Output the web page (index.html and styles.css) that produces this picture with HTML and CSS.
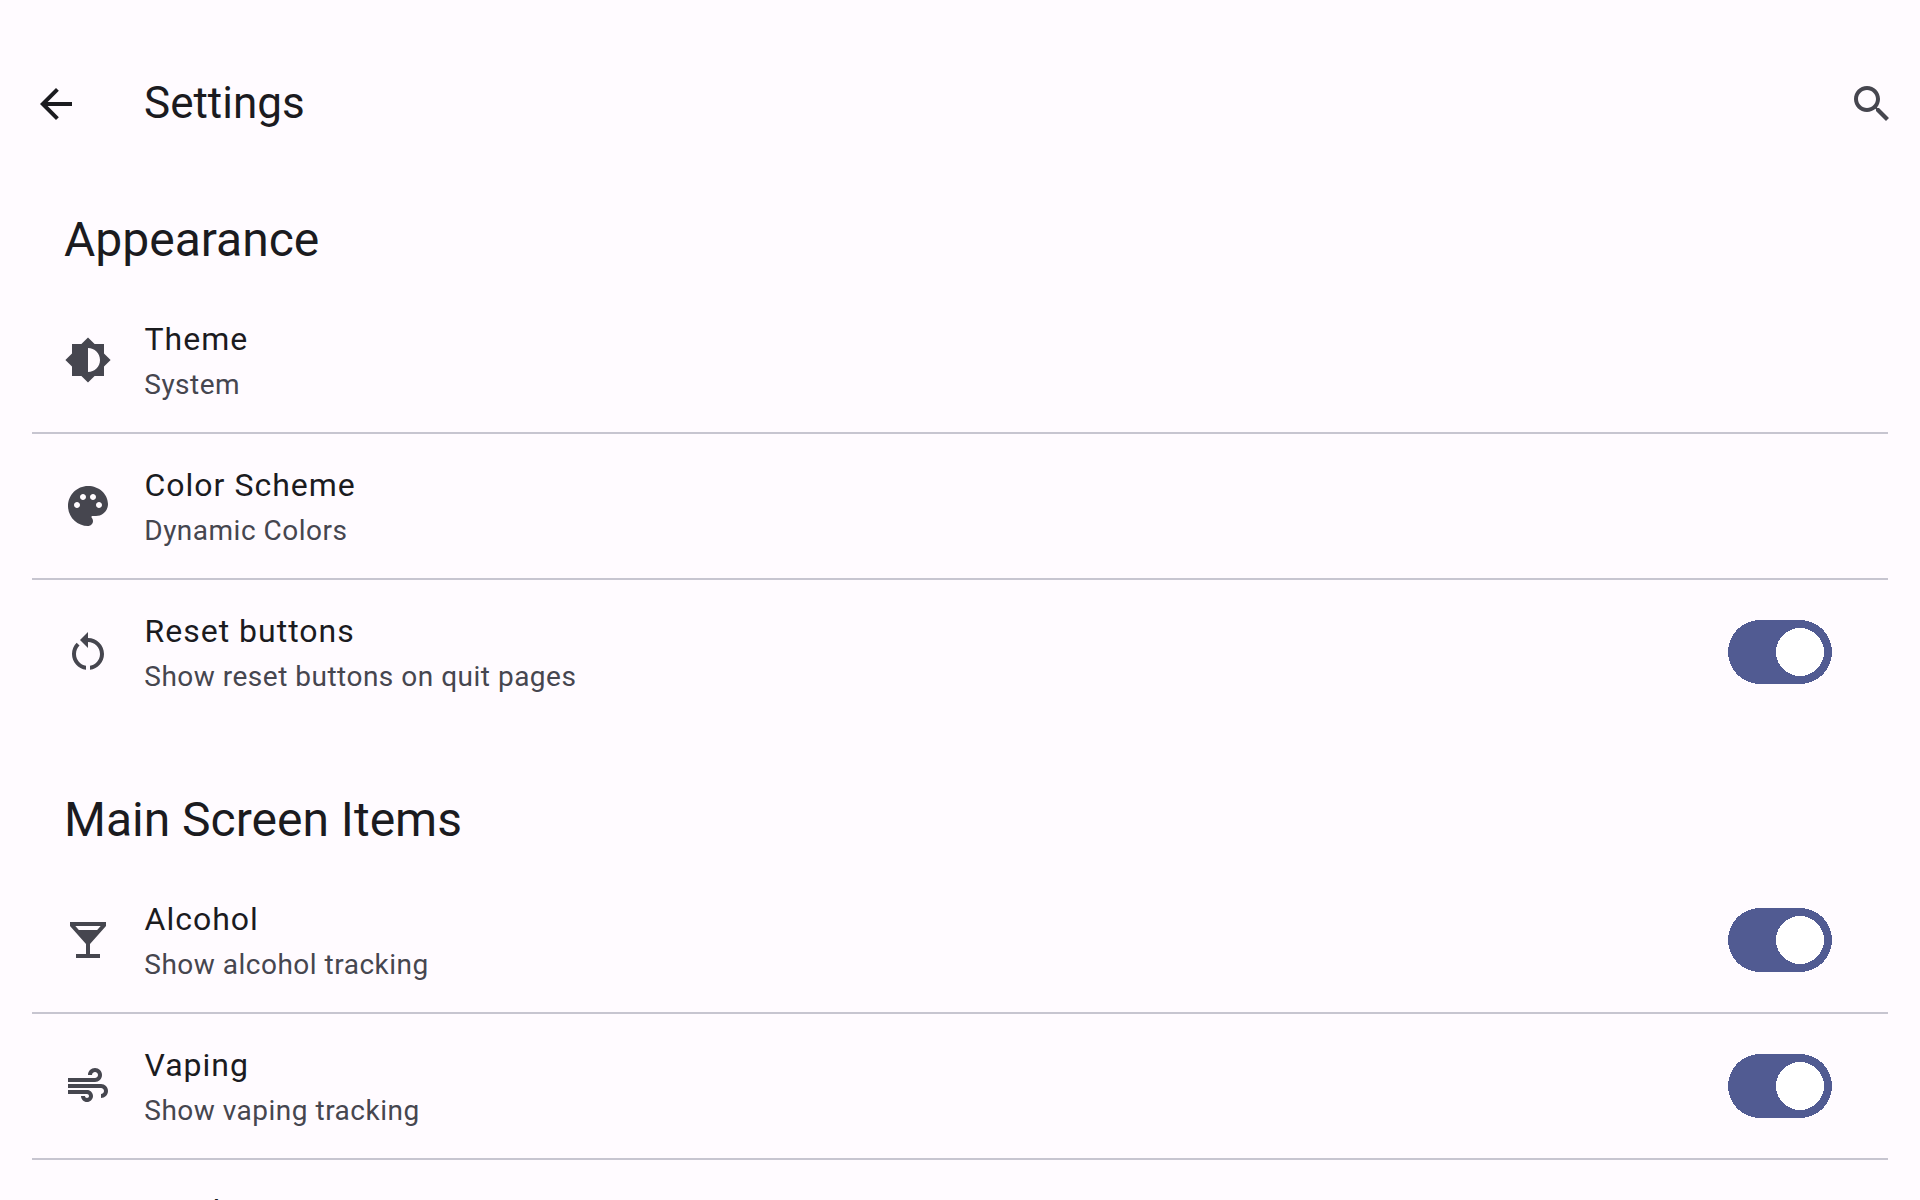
FILE: index.html
```html
<!DOCTYPE html>
<html lang="en">
<head>
<meta charset="utf-8">
<title>Settings</title>
<link rel="stylesheet" href="styles.css">
</head>
<body>
<header class="toolbar">
  <svg class="icon icon-dark" viewBox="0 0 24 24"><path d="M20 11H7.83l5.59-5.59L12 4l-8 8 8 8 1.41-1.41L7.83 13H20v-2z"/></svg>
  <h1 class="toolbar-title">Settings</h1>
  <svg class="icon" viewBox="0 0 24 24"><path d="M15.5 14h-.79l-.28-.27C15.41 12.59 16 11.11 16 9.5 16 5.91 13.09 3 9.5 3S3 5.91 3 9.5 5.91 16 9.5 16c1.61 0 3.09-.59 4.23-1.57l.27.28v.79l5 4.99L20.49 19l-4.99-5zm-6 0C7.01 14 5 11.99 5 9.5S7.01 5 9.5 5 14 7.01 14 9.5 11.99 14 9.5 14z"/></svg>
</header>
<main>
  <section class="group">
    <h2 class="group-title">Appearance</h2>
    <div class="row">
      <svg class="icon" viewBox="0 0 24 24"><path d="M20 15.31L23.31 12 20 8.69V4h-4.69L12 .69 8.69 4H4v4.69L.69 12 4 15.31V20h4.69L12 23.31 15.31 20H20v-4.69zM12 18V6c3.31 0 6 2.69 6 6s-2.69 6-6 6z"/></svg>
      <div class="text"><div class="title">Theme</div><div class="summary">System</div></div>
    </div>
    <div class="row">
      <svg class="icon" viewBox="0 0 24 24"><path d="M12 2C6.49 2 2 6.49 2 12s4.49 10 10 10c1.38 0 2.5-1.12 2.5-2.5 0-.61-.23-1.2-.64-1.67-.08-.1-.13-.21-.13-.33 0-.28.22-.5.5-.5H16c3.31 0 6-2.69 6-6 0-4.96-4.49-9-10-9zm5.5 11c-.83 0-1.5-.67-1.5-1.5s.67-1.5 1.5-1.5 1.5.67 1.5 1.5-.67 1.5-1.5 1.5zm-3-4c-.83 0-1.5-.67-1.5-1.5S13.67 6 14.5 6s1.5.67 1.5 1.5S15.33 9 14.5 9zM5 11.5c0-.83.67-1.5 1.5-1.5s1.5.67 1.5 1.5S7.33 13 6.5 13 5 12.33 5 11.5zm6-4c0 .83-.67 1.5-1.5 1.5S8 8.33 8 7.5 8.67 6 9.5 6s1.5.67 1.5 1.5z"/></svg>
      <div class="text"><div class="title">Color Scheme</div><div class="summary">Dynamic Colors</div></div>
    </div>
    <div class="row">
      <svg class="icon" viewBox="0 0 24 24"><path d="M12 5V2L8 6l4 4V7c3.31 0 6 2.69 6 6 0 2.97-2.17 5.43-5 5.91v2.02c3.95-.49 7-3.85 7-7.93 0-4.42-3.58-8-8-8zm-6 8c0-1.65.67-3.15 1.76-4.24L6.34 7.34C4.9 8.79 4 10.79 4 13c0 4.08 3.05 7.44 7 7.93v-2.02c-2.83-.48-5-2.94-5-5.91z"/></svg>
      <div class="text"><div class="title">Reset buttons</div><div class="summary">Show reset buttons on quit pages</div></div>
      <svg class="switch" viewBox="0 0 104 64"><rect class="track" width="104" height="64" rx="32"/><circle class="thumb" cx="72" cy="32" r="24"/></svg>
    </div>
  </section>
  <section class="group">
    <h2 class="group-title">Main Screen Items</h2>
    <div class="row">
      <svg class="icon" viewBox="0 0 24 24"><path d="M21 5V3H3v2l8 9v5H6v2h12v-2h-5v-5l8-9zM7.43 7L5.66 5h12.69l-1.78 2H7.43z"/></svg>
      <div class="text"><div class="title">Alcohol</div><div class="summary">Show alcohol tracking</div></div>
      <svg class="switch" viewBox="0 0 104 64"><rect class="track" width="104" height="64" rx="32"/><circle class="thumb" cx="72" cy="32" r="24"/></svg>
    </div>
    <div class="row">
      <svg class="icon" viewBox="0 0 24 24"><path d="M14.5 17c0 1.65-1.35 3-3 3s-3-1.35-3-3h2c0 .55.45 1 1 1s1-.45 1-1-.45-1-1-1H2v-2h9.5c1.65 0 3 1.35 3 3zM19 6.5C19 4.57 17.43 3 15.5 3S12 4.57 12 6.5h2c0-.83.67-1.5 1.5-1.5s1.5.67 1.5 1.5S16.33 8 15.5 8H2v2h13.5c1.93 0 3.5-1.57 3.5-3.5zm-.5 4.5H2v2h16.5c.83 0 1.5.67 1.5 1.5s-.67 1.5-1.5 1.5v2c1.93 0 3.5-1.57 3.5-3.5S20.43 11 18.5 11z"/></svg>
      <div class="text"><div class="title">Vaping</div><div class="summary">Show vaping tracking</div></div>
      <svg class="switch" viewBox="0 0 104 64"><rect class="track" width="104" height="64" rx="32"/><circle class="thumb" cx="72" cy="32" r="24"/></svg>
    </div>
    <div class="row">
      <div class="icon"></div>
      <div class="text"><div class="title">Smoking</div></div>
    </div>
  </section>
</main>
</body>
</html>
```
FILE: styles.css
```css
* { box-sizing: border-box; }

body {
  margin: 0;
  height: 1200px;
  overflow: hidden;
  background: #fffbff;
  color: #1b1b1f;
  font-family: Roboto, sans-serif;
}

h1, h2 { margin: 0; font-weight: 400; }

.icon {
  flex: none;
  width: 48px;
  height: 48px;
  fill: #46464f;
}
.icon-dark { fill: #1b1b1f; }

.toolbar {
  display: flex;
  align-items: center;
  height: 160px;
  padding: 48px 24px 0 32px;
}
.toolbar-title {
  flex: 1;
  margin-left: 64px;
  padding-bottom: 2px;
  font-size: 44px;
  line-height: 56px;
}

.group-title {
  height: 144px;
  padding: 64px 64px 0;
  font-size: 48px;
  line-height: 64px;
}
.group:first-child .group-title { height: 128px; padding-top: 48px; }

.row {
  display: flex;
  align-items: flex-start;
  height: 146px;
  margin: 0 32px;
  padding: 28px 56px 0 32px;
  border-bottom: 2px solid #c7c5d0;
}
.row:last-child { height: 144px; border-bottom: 0; }
.row .icon { margin-top: 20px; }

.text { flex: 1; margin-left: 32px; }
.title {
  padding-left: 0.5px;
  font-size: 32px;
  line-height: 46px;
  letter-spacing: 1px;
}
.summary {
  padding: 3px 0 0 0.25px;
  color: #46464f;
  font-size: 28px;
  line-height: 40px;
  letter-spacing: 0.5px;
}

.switch {
  flex: none;
  width: 104px;
  height: 64px;
  margin-top: 12px;
  shape-rendering: crispEdges;
}
.track { fill: #515b92; }
.thumb { fill: #fff; }
```
